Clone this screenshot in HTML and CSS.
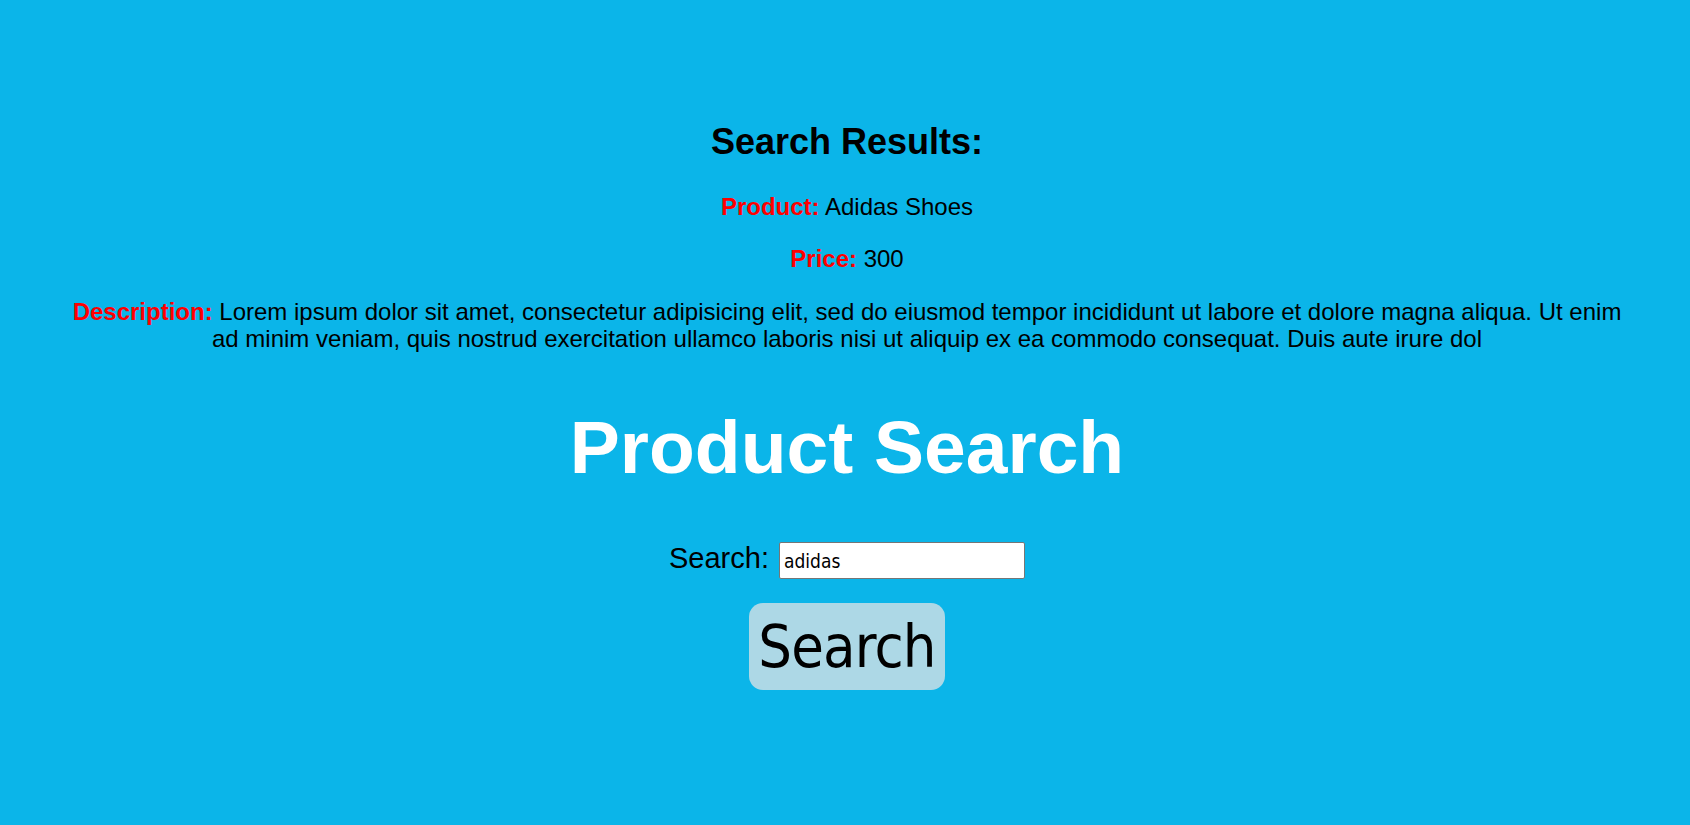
FILE: index.html
```html
<!DOCTYPE html>
<html lang="en">
<head>
<meta charset="utf-8">
<title>Product Search</title>
<link rel="stylesheet" href="styles.css">
</head>
<body>
<div class="page">
  <section class="results">
    <h2 class="results-title">Search Results:</h2>
    <p class="result-line first"><span class="label">Product:</span> Adidas Shoes</p>
    <p class="result-line"><span class="label">Price:</span> 300</p>
    <p class="result-line desc"><span class="label">Description:</span> Lorem ipsum dolor sit amet, consectetur adipisicing elit, sed do eiusmod tempor incididunt ut labore et dolore magna aliqua. Ut enim ad minim veniam, quis nostrud exercitation ullamco laboris nisi ut aliquip ex ea commodo consequat. Duis aute irure dol</p>
  </section>
  <h1 class="title">Product Search</h1>
  <form class="search-form" onsubmit="return false;">
    <div class="search-row">
      <label class="search-label" for="q">Search:</label>
      <input class="search-input" id="q" type="text" value="adidas">
    </div>
    <button class="search-button" type="submit">Search</button>
  </form>
</div>
</body>
</html>
```

FILE: styles.css
```css
html, body {
  margin: 0;
  padding: 0;
}

body {
  background: #0bb5e9;
  font-family: "Liberation Sans", Arial, sans-serif;
  color: #000;
  min-height: 825px;
}

.page {
  padding-top: 121px;
  padding-left: 4px;
  text-align: center;
}

.results {
  width: 1566px;
  margin: 0 auto;
}

.results-title {
  font-size: 36px;
  line-height: 41px;
  font-weight: bold;
  margin: 0;
}

.result-line {
  font-size: 24px;
  line-height: 27.6px;
  margin: 24px 0 0;
}

.result-line.first {
  margin-top: 31px;
}

.result-line.desc {
  margin-top: 25.5px;
}

.label {
  color: #ff0000;
  font-weight: bold;
}

.title {
  font-size: 75px;
  line-height: 86px;
  font-weight: bold;
  color: #ffffff;
  margin: 51px 0 52px;
}

.search-form {
  display: flex;
  flex-direction: column;
  align-items: center;
}

.search-row {
  display: flex;
  align-items: baseline;
  gap: 10px;
}

.search-label {
  font-size: 29px;
  line-height: 33px;
}

.search-input {
  box-sizing: border-box;
  width: 246px;
  height: 37px;
  padding: 0 4px;
  border: 1px solid #767676;
  border-radius: 2px;
  background: #fff;
  font-family: "DejaVu Sans Condensed", "DejaVu Sans", sans-serif;
  font-size: 19px;
  color: #000;
  outline: none;
}

.search-button {
  margin-top: 24px;
  box-sizing: border-box;
  height: 87px;
  padding: 0 9px;
  border: none;
  border-radius: 14px;
  background: #add8e6;
  font-family: "DejaVu Sans Condensed", "DejaVu Sans", sans-serif;
  font-size: 59px;
  line-height: 85px;
  letter-spacing: -0.8px;
  color: #000;
  cursor: pointer;
}
```
